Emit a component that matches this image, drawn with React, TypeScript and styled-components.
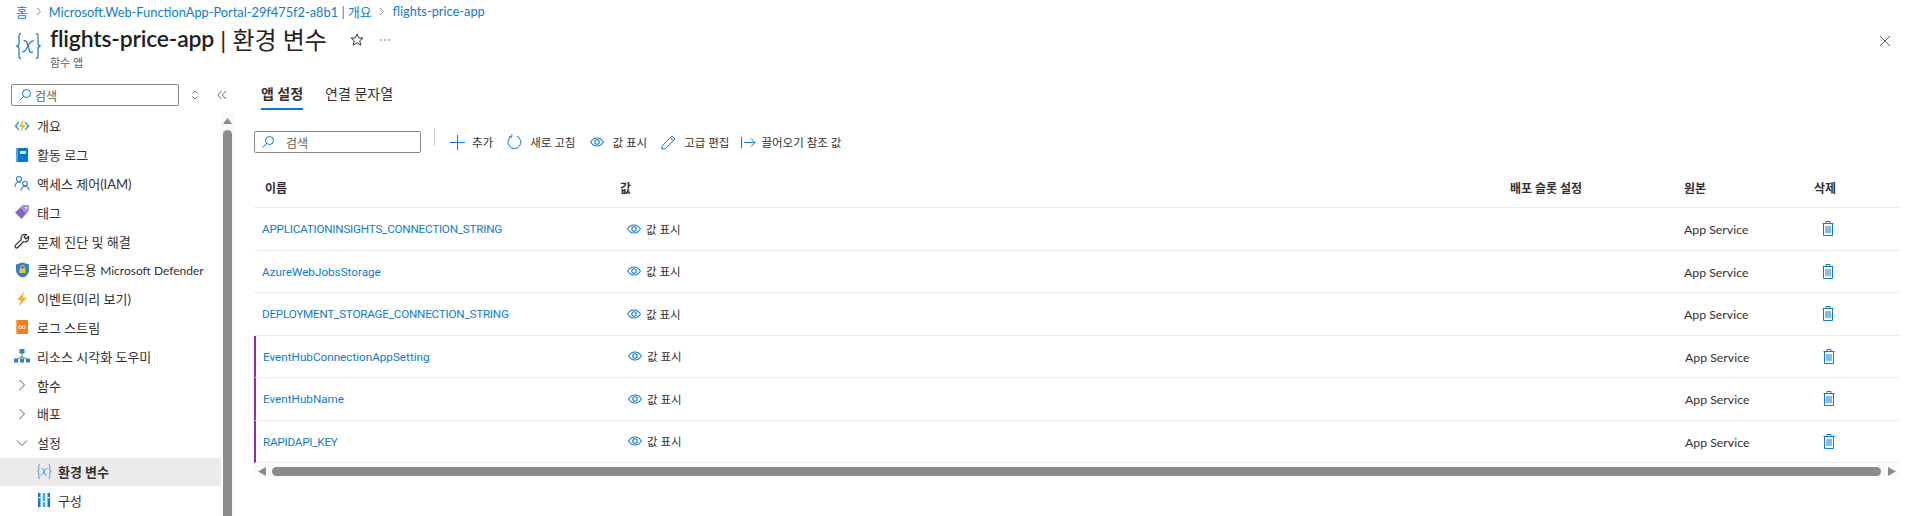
import { FunctionComponent, ReactNode } from "react";
import styled, { createGlobalStyle } from "styled-components";

const GlobalStyle = createGlobalStyle`
  html, body {
    margin: 0;
    padding: 0;
    background: #fff;
  }
  body {
    font-family: "Lato", "Noto Sans CJK KR", sans-serif;
    color: #323130;
    overflow: hidden;
  }
`;

const Page = styled.div`
  width: 1908px;
  height: 516px;
  overflow: hidden;
  display: flex;
  flex-direction: column;
`;

/* header */
const Breadcrumb = styled.div`
  height: 22px;
  padding-left: 16px;
  display: flex;
  align-items: center;
  gap: 6px;
  font-size: 12.8px;
  color: #0f7bd0;
`;
const Crumb = styled.span`
  white-space: nowrap;
`;
const TitleBar = styled.div`
  height: 50px;
  display: flex;
  align-items: flex-start;
  padding-left: 14px;
  padding-right: 17px;
`;
const TitleIcon = styled.div`
  width: 36px;
  height: 50px;
  padding-top: 10px;
  box-sizing: border-box;
`;
const TitleText = styled.div`
  display: flex;
  flex-direction: column;
`;
const TitleLine = styled.div`
  display: flex;
  align-items: center;
  height: 38px;
  margin-top: -3px;
  white-space: pre;
`;
const TitleName = styled.span`
  font-size: 23px;
  font-weight: 600;
  color: #201f1e;
  letter-spacing: -0.2px;
`;
const TitleSection = styled.span`
  font-size: 24px;
  font-weight: 400;
  color: #252423;
`;
const Subtitle = styled.div`
  font-size: 11px;
  line-height: 12px;
  color: #605e5c;
`;
const TitleAction = styled.button<{ $gap: number }>`
  border: 0;
  background: none;
  padding: 3px 0 0;
  margin-left: ${(p) => p.$gap}px;
  display: flex;
  height: 38px;
  box-sizing: border-box;
  align-items: center;
`;
const CloseButton = styled.button`
  margin-left: auto;
  border: 0;
  background: none;
  padding: 0;
  height: 38px;
  display: flex;
  align-items: center;
`;

/* body */
const Body = styled.div`
  flex: 1;
  display: flex;
  min-height: 0;
`;
const Sidebar = styled.aside`
  width: 234px;
  flex-shrink: 0;
  padding-top: 12px;
  display: flex;
  flex-direction: column;
`;
const SideTop = styled.div`
  display: flex;
  align-items: center;
  padding-left: 11px;
  height: 22px;
`;
const SearchBox = styled.div<{ $width: number; $textGap: number }>`
  width: ${(p) => p.$width}px;
  height: 22px;
  box-sizing: border-box;
  border: 1px solid #8a8886;
  border-radius: 2px;
  display: flex;
  align-items: center;
  gap: ${(p) => p.$textGap}px;
  padding-left: 6px;
  font-size: 12px;
  color: #605e5c;
  flex-shrink: 0;
`;
const SideAction = styled.button<{ $gap: number }>`
  border: 0;
  background: none;
  padding: 0;
  margin-left: ${(p) => p.$gap}px;
  display: flex;
`;
const SideScroll = styled.div`
  flex: 1;
  display: flex;
  padding-top: 6px;
  min-height: 0;
`;
const NavList = styled.nav`
  width: 221px;
  flex-shrink: 0;
`;
const NavItem = styled.div<{ $sub?: boolean; $active?: boolean }>`
  height: 28.8px;
  box-sizing: border-box;
  padding-bottom: 1px;
  display: flex;
  align-items: center;
  padding-left: ${(p) => (p.$sub ? 36 : 14)}px;
  gap: ${(p) => (p.$sub ? 6 : 7)}px;
  font-size: 13px;
  white-space: pre;
  color: #323130;
  font-weight: ${(p) => (p.$active ? 700 : 400)};
  background: ${(p) => (p.$active ? "#edebe9" : "transparent")};
`;
const NavLatin = styled.span`
  font-size: 12px;
`;
const NavIcon = styled.span`
  width: 16px;
  height: 16px;
  display: flex;
  align-items: center;
  justify-content: center;
  flex-shrink: 0;
`;
const VScroll = styled.div`
  width: 13px;
  background: #fafafa;
  display: flex;
  flex-direction: column;
  align-items: center;
  padding-top: 6px;
  box-sizing: border-box;
`;
const VThumb = styled.div`
  width: 9px;
  flex: 1;
  margin-top: 6px;
  background: #8b8b8b;
  border-radius: 5px 5px 0 0;
`;

/* main */
const Main = styled.main`
  flex: 1;
  min-width: 0;
  padding-top: 12px;
  padding-left: 20px;
`;
const Tabs = styled.div`
  display: flex;
  gap: 22px;
  padding-left: 7px;
  height: 26px;
`;
const Tab = styled.div<{ $active?: boolean }>`
  font-size: 14px;
  line-height: 20px;
  height: 26px;
  box-sizing: border-box;
  font-weight: ${(p) => (p.$active ? 700 : 400)};
  color: #323130;
  border-bottom: 2px solid ${(p) => (p.$active ? "#0078d4" : "transparent")};
`;
const Toolbar = styled.div`
  margin-top: 21px;
  display: flex;
  align-items: center;
  height: 22px;
`;
const ToolDivider = styled.div`
  width: 1px;
  height: 18px;
  background: #c8c6c4;
  margin: -10px 15px 0 13px;
`;
const ToolButton = styled.div<{ $gap?: number; $ml?: number }>`
  display: flex;
  align-items: center;
  gap: ${(p) => p.$gap ?? 8}px;
  margin-left: ${(p) => p.$ml ?? 14}px;
  font-size: 11.5px;
  white-space: nowrap;
  color: #323130;
`;

/* table */
const Table = styled.div`
  width: 1646px;
  margin-top: 12px;
`;
const HeadRow = styled.div`
  display: grid;
  grid-template-columns: 365px 891px 174px 130px 86px;
  height: 43px;
  align-items: center;
  border-bottom: 1px solid #edebe9;
  box-sizing: border-box;
  font-size: 12px;
  font-weight: 700;
  color: #323130;
`;
const HeadCell = styled.div<{ $pad?: number }>`
  padding-left: ${(p) => p.$pad ?? 0}px;
  padding-top: 2px;
`;
const Row = styled.div<{ $pending?: boolean }>`
  display: grid;
  grid-template-columns: ${(p) => (p.$pending ? "364px" : "365px")} 891px 174px 130px 86px;
  height: 42.5px;
  align-items: center;
  box-sizing: border-box;
  border-bottom: 1px solid #edebe9;
  border-left: ${(p) => (p.$pending ? "2px solid #8d2ea8" : "0")};
  font-size: 12px;
  overflow: hidden;
`;
const NameCell = styled.a<{ $pending?: boolean; $caps?: boolean }>`
  padding-left: ${(p) => (p.$pending ? 7 : 8)}px;
  padding-top: 1px;
  font-family: "Roboto", sans-serif;
  color: #0f7bd0;
  font-size: 11.7px;
  letter-spacing: ${(p) => (p.$caps ? "-0.23px" : "0")};
  white-space: nowrap;
`;
const ValueCell = styled.div`
  padding-left: 8px;
  display: flex;
  align-items: center;
  gap: 5px;
  font-size: 11.5px;
`;
const SourceCell = styled.div`
  padding-top: 2px;
  font-size: 12.3px;
`;
const DeleteCell = styled.div`
  padding-left: 8px;
  display: flex;
`;
const HScroll = styled.div`
  width: 1646px;
  height: 12px;
  margin-top: 2px;
  background: #fafafa;
  display: flex;
  align-items: center;
  padding: 0 4px;
  box-sizing: border-box;
`;
const HThumb = styled.div`
  flex: 1;
  height: 9px;
  margin: 0 7px 0 6px;
  background: #8b8b8b;
  border-radius: 5px;
`;

/* icons */
const SearchIcon = () => (
  <svg width="14" height="14" viewBox="0 0 14 14" fill="none" stroke="#0078d4" strokeWidth="1">
    <circle cx="8.5" cy="5.5" r="4" />
    <path d="M5.5 8.5 1.500 12.500" />
  </svg>
);
const Chevron: FunctionComponent<{ down?: boolean; size?: number }> = ({ down, size = 12 }) => (
  <svg width={size} height={size} viewBox="0 0 12 12" fill="none" stroke="#605e5c" strokeWidth="1">
    <path d={down ? "M1 3.500 6 8.500 11 3.500" : "M3.500 1 8.500 6 3.500 11"} />
  </svg>
);
const VarIcon: FunctionComponent<{ size: number; weight?: number }> = ({ size, weight = 1 }) => (
  <svg width={size} height={size} viewBox="0 0 28 28" fill="none" stroke="#2b7cc4" strokeWidth={weight * 1.3}>
    <path d="M7 1.500C4.500 1.500 5 4 5 7v4.200c0 1.600-.8 2.400-2.500 2.800 1.700.4 2.500 1.200 2.500 2.800V21c0 3-.5 5.500 2 5.500" />
    <path d="M22 1.500c2.500 0 2 2.500 2 5.500v4.200c0 1.600.8 2.400 2.500 2.800-1.700.4-2.500 1.200-2.500 2.800V21c0 3 .5 5.500-2 5.500" />
    <path d="M9.500 9c2.200-.8 3.200.4 3.800 2.500l2 7c.5 1.800 1.700 2.500 3.700 1.500" />
    <path d="M20 9c-1.800-.6-3.200.3-4.800 2.800l-3.400 6c-1 1.800-2 2.700-3.800 1.900" />
  </svg>
);
const FunctionIcon = () => (
  <svg width="16" height="16" viewBox="0 0 16 16">
    <path d="M4.500 3.500 .5 8l4 4.500 1-1L2.600 8l2.900-3.500z" fill="#3a9be0" />
    <path d="M11.500 3.500 15.500 8l-4 4.500-1-1L13.400 8l-2.900-3.500z" fill="#3a9be0" />
    <path d="M9.500 1 5 8.800h3L6.300 15l5.200-8H8.400z" fill="#f6b21b" />
  </svg>
);
const BookIcon = () => (
  <svg width="14" height="16" viewBox="0 0 14 16">
    <rect x="1" y="1" width="12" height="14" rx="1" fill="#0078d4" />
    <rect x="1" y="1" width="2" height="14" fill="#50a8e8" />
    <rect x="5" y="4" width="6" height="3" fill="#d6ecfb" />
  </svg>
);
const PeopleIcon = () => (
  <svg width="16" height="16" viewBox="0 0 16 16" fill="none" stroke="#2a7fd0" strokeWidth="1.1">
    <circle cx="5" cy="4" r="2.500" />
    <path d="M1 12c0-3 1.500-5 4-5 1 0 1.600.2 2.200.7" />
    <circle cx="11" cy="8.500" r="2.300" />
    <path d="M7 15.500c0-2.500 1.500-4 4-4s4 1.500 4 4" />
  </svg>
);
const TagIcon = () => (
  <svg width="16" height="16" viewBox="0 0 16 16">
    <path d="M9 1h5.500v6L7.500 15 1 8.500z" fill="#8661c5" />
    <path d="M9 1h5.500v6L12 9.500 6 3.800z" fill="#a98de0" />
    <circle cx="12" cy="3.800" r="1" fill="#f2ecfb" />
  </svg>
);
const WrenchIcon = () => (
  <svg width="16" height="16" viewBox="0 0 16 16" fill="none" stroke="#252423" strokeWidth="1.1">
    <path d="M14.500 3.500 12 6 10 4l2.500-2.500A4 4 0 0 0 7.300 6.600L1.500 12.200a1.600 1.600 0 0 0 2.300 2.300L9.400 8.700a4 4 0 0 0 5.100-5.200z" />
  </svg>
);
const ShieldIcon = () => (
  <svg width="15" height="16" viewBox="0 0 15 16">
    <path d="M7.500.5 14 2.500V8c0 4-3 6.500-6.500 7.500C4 14.500 1 12 1 8V2.500z" fill="#2a7fd0" />
    <rect x="4.500" y="6.500" width="6" height="4.500" fill="#f5c02c" />
    <path d="M5.700 6.500V5a1.800 1.800 0 0 1 3.600 0v1.500" fill="none" stroke="#f5c02c" />
  </svg>
);
const BoltIcon = () => (
  <svg width="14" height="16" viewBox="0 0 14 16">
    <path d="M9.500 .5 2 9h4L3.500 15.500 12 6.500H7.500z" fill="#f6b21b" />
  </svg>
);
const StreamIcon = () => (
  <svg width="14" height="16" viewBox="0 0 14 16">
    <rect x="1" y="1" width="12" height="14" rx="1" fill="#ef7d22" />
    <rect x="1" y="1" width="1.500" height="14" fill="#f9a65a" />
    <path d="M4 7h2.500v2.500H4zM7.500 7H10v2.500H7.500z" fill="none" stroke="#fbe3cf" strokeWidth=".9" />
  </svg>
);
const TreeIcon = () => (
  <svg width="16" height="16" viewBox="0 0 16 16">
    <path d="M8 4v6M2.500 12 8 8.500l5.500 3.500" fill="none" stroke="#6cb33f" strokeWidth="1.200" />
    <rect x="5.500" y="1" width="5" height="4.500" fill="#2a7fd0" />
    <rect x="0" y="10.500" width="4" height="4" fill="#2a7fd0" />
    <rect x="6" y="10.500" width="4" height="4" fill="#2a7fd0" />
    <rect x="12" y="10.500" width="4" height="4" fill="#2a7fd0" />
  </svg>
);
const ConfigIcon = () => (
  <svg width="14" height="16" viewBox="0 0 14 16">
    <rect x="1" y="1" width="2.500" height="14" fill="#0f7bd0" />
    <rect x="5.700" y="1" width="2.500" height="14" fill="#35b0ea" />
    <rect x="10.500" y="1" width="2.500" height="14" fill="#0f7bd0" />
    <rect x="1" y="5" width="2.500" height="1.200" fill="#fff" />
    <rect x="5.700" y="9" width="2.500" height="1.200" fill="#fff" />
    <rect x="10.500" y="5" width="2.500" height="1.200" fill="#fff" />
  </svg>
);
const EyeIcon = () => (
  <svg width="14" height="10" viewBox="0 0 14 10" fill="none" stroke="#0f7bd0" strokeWidth="1.100">
    <path d="M.6 5C2.200 2.400 4.400 1 7 1s4.800 1.400 6.400 4C11.800 7.600 9.600 9 7 9S2.200 7.600.6 5z" />
    <circle cx="7" cy="5" r="2.200" />
  </svg>
);
const TrashIcon = () => (
  <svg width="12" height="15" viewBox="0 0 12 15" fill="none" stroke="#0f7bd0" strokeWidth="1">
    <path d="M.5 2.500h11M4 2.500v-2h4v2M1.500 2.500v12h9v-12" />
    <path d="M4 5v7M6 5v7M8 5v7" />
  </svg>
);
const PlusIcon = () => (
  <svg width="15" height="15" viewBox="0 0 15 15" stroke="#0f7bd0" strokeWidth="1">
    <path d="M7.500 0v15M0 7.500h15" />
  </svg>
);
const RefreshIcon = () => (
  <svg width="15" height="16" viewBox="0 0 15 16" fill="none" stroke="#0f7bd0" strokeWidth="1">
    <path d="M4.800 2.300A6.400 6.400 0 1 0 9.800 2.200" />
    <path d="M4.800 .3v2.600H2" />
  </svg>
);
const PencilIcon = () => (
  <svg width="15" height="15" viewBox="0 0 15 15" fill="none" stroke="#0f7bd0" strokeWidth="1">
    <path d="M11 1 14 4 4.500 13.500 .8 14.200 1.500 10.500z" />
    <path d="M9.500 2.500l3 3" />
  </svg>
);
const PullIcon = () => (
  <svg width="15" height="11" viewBox="0 0 15 11" fill="none" stroke="#0f7bd0" strokeWidth="1">
    <path d="M.5 0v11M3 5.500h11M10 1.500l4 4-4 4" />
  </svg>
);

type NavEntry = { key: string; label: ReactNode; icon: ReactNode; sub?: boolean; active?: boolean };

const navItems: NavEntry[] = [
  { key: "overview", label: "개요", icon: <FunctionIcon /> },
  { key: "log", label: "활동 로그", icon: <BookIcon /> },
  { key: "iam", label: "액세스 제어(IAM)", icon: <PeopleIcon /> },
  { key: "tags", label: "태그", icon: <TagIcon /> },
  { key: "diag", label: "문제 진단 및 해결", icon: <WrenchIcon /> },
  {
    key: "defender",
    label: (
      <span>
        클라우드용 <NavLatin>Microsoft Defender</NavLatin>
      </span>
    ),
    icon: <ShieldIcon />,
  },
  { key: "events", label: "이벤트(미리 보기)", icon: <BoltIcon /> },
  { key: "stream", label: "로그 스트림", icon: <StreamIcon /> },
  { key: "visual", label: "리소스 시각화 도우미", icon: <TreeIcon /> },
  { key: "functions", label: "함수", icon: <Chevron /> },
  { key: "deploy", label: "배포", icon: <Chevron /> },
  { key: "settings", label: "설정", icon: <Chevron down /> },
  { key: "env", label: "환경 변수", icon: <VarIcon size={17} />, sub: true, active: true },
  { key: "config", label: "구성", icon: <ConfigIcon />, sub: true },
];

const settings = [
  { name: "APPLICATIONINSIGHTS_CONNECTION_STRING", pending: false, caps: true },
  { name: "AzureWebJobsStorage", pending: false, caps: false },
  { name: "DEPLOYMENT_STORAGE_CONNECTION_STRING", pending: false, caps: true },
  { name: "EventHubConnectionAppSetting", pending: true, caps: false },
  { name: "EventHubName", pending: true, caps: false },
  { name: "RAPIDAPI_KEY", pending: true, caps: true },
];

const App: FunctionComponent = () => {
  return (
    <Page>
      <GlobalStyle />
      <Breadcrumb>
        <Crumb>홈</Crumb>
        <Chevron size={9} />
        <Crumb>Microsoft.Web-FunctionApp-Portal-29f475f2-a8b1 | 개요</Crumb>
        <Chevron size={9} />
        <Crumb>flights-price-app</Crumb>
      </Breadcrumb>
      <TitleBar>
        <TitleIcon>
          <VarIcon size={28} />
        </TitleIcon>
        <TitleText>
          <TitleLine>
            <TitleName>flights-price-app</TitleName>
            <TitleSection> | 환경 변수</TitleSection>
            <TitleAction $gap={23}>
              <svg width="14" height="14" viewBox="0 0 14 14" fill="none" stroke="#323130" strokeWidth="1">
                <path d="M7 1l1.800 4h4.200l-3.300 2.800 1.200 4.400L7 9.800l-3.900 2.400 1.200-4.400L1 5h4.200z" />
              </svg>
            </TitleAction>
            <TitleAction $gap={15}>
              <svg width="12" height="4" viewBox="0 0 12 4" fill="#605e5c">
                <circle cx="2" cy="2" r=".8" />
                <circle cx="6" cy="2" r=".8" />
                <circle cx="10" cy="2" r=".8" />
              </svg>
            </TitleAction>
          </TitleLine>
          <Subtitle>함수 앱</Subtitle>
        </TitleText>
        <CloseButton>
          <svg width="12" height="12" viewBox="0 0 12 12" stroke="#605e5c" strokeWidth="1">
            <path d="M1 1l10 10M11 1 1 11" />
          </svg>
        </CloseButton>
      </TitleBar>
      <Body>
        <Sidebar>
          <SideTop>
            <SearchBox $width={168} $textGap={3}>
              <SearchIcon />
              검색
            </SearchBox>
            <SideAction $gap={11}>
              <svg width="10" height="12" viewBox="0 0 10 12" fill="none" stroke="#605e5c" strokeWidth=".9">
                <path d="M2.500 4.500 5 2l2.500 2.500M2.500 7.500 5 10l2.500-2.500" />
              </svg>
            </SideAction>
            <SideAction $gap={17}>
              <svg width="10" height="10" viewBox="0 0 10 10" fill="none" stroke="#605e5c" strokeWidth=".9">
                <path d="M4.500 1 .8 5l3.700 4M9 1 5.300 5 9 9" />
              </svg>
            </SideAction>
          </SideTop>
          <SideScroll>
            <NavList>
              {navItems.map((item) => (
                <NavItem key={item.key} $sub={item.sub} $active={item.active}>
                  <NavIcon>{item.icon}</NavIcon>
                  {item.label}
                </NavItem>
              ))}
            </NavList>
            <VScroll>
              <svg width="9" height="6" viewBox="0 0 9 6" fill="#8b8b8b">
                <path d="M4.500 0 9 6H0z" />
              </svg>
              <VThumb />
            </VScroll>
          </SideScroll>
        </Sidebar>
        <Main>
          <Tabs>
            <Tab $active>앱 설정</Tab>
            <Tab>연결 문자열</Tab>
          </Tabs>
          <Toolbar>
            <SearchBox $width={167} $textGap={11}>
              <SearchIcon />
              검색
            </SearchBox>
            <ToolDivider />
            <ToolButton $gap={7} $ml={0}>
              <PlusIcon />
              추가
            </ToolButton>
            <ToolButton>
              <RefreshIcon />
              새로 고침
            </ToolButton>
            <ToolButton $ml={15}>
              <EyeIcon />값 표시
            </ToolButton>
            <ToolButton>
              <PencilIcon />
              고급 편집
            </ToolButton>
            <ToolButton $gap={5} $ml={12}>
              <PullIcon />
              끌어오기 참조 값
            </ToolButton>
          </Toolbar>
          <Table>
            <HeadRow>
              <HeadCell $pad={11}>이름</HeadCell>
              <HeadCell $pad={1}>값</HeadCell>
              <HeadCell>배포 슬롯 설정</HeadCell>
              <HeadCell>원본</HeadCell>
              <HeadCell>삭제</HeadCell>
            </HeadRow>
            {settings.map((s) => (
              <Row key={s.name} $pending={s.pending}>
                <NameCell $pending={s.pending} $caps={s.caps}>
                  {s.name}
                </NameCell>
                <ValueCell>
                  <EyeIcon />값 표시
                </ValueCell>
                <div />
                <SourceCell>App Service</SourceCell>
                <DeleteCell>
                  <TrashIcon />
                </DeleteCell>
              </Row>
            ))}
          </Table>
          <HScroll>
            <svg width="8" height="9" viewBox="0 0 8 9" fill="#8b8b8b">
              <path d="M0 4.500 8 0v9z" />
            </svg>
            <HThumb />
            <svg width="8" height="9" viewBox="0 0 8 9" fill="#8b8b8b">
              <path d="M8 4.500 0 0v9z" />
            </svg>
          </HScroll>
        </Main>
      </Body>
    </Page>
  );
};

export default App;
